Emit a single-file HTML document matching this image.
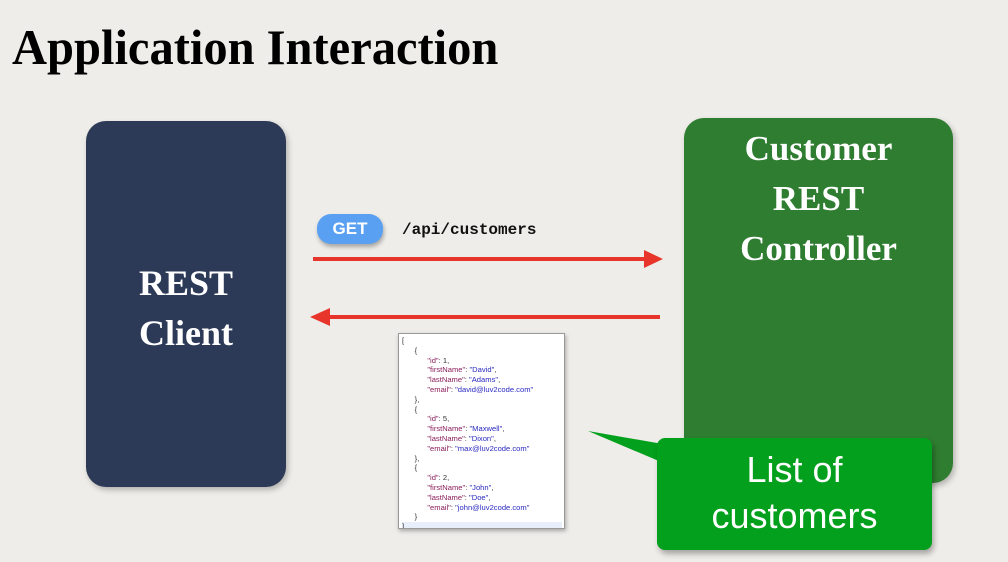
<!DOCTYPE html>
<html><head><meta charset="utf-8"><style>
body{margin:0;width:1008px;height:562px;background:#efede9;position:relative;overflow:hidden;font-family:"Liberation Sans",sans-serif}
.t{position:absolute;left:12px;top:18px;font-family:"Liberation Serif",serif;font-weight:bold;font-size:50px;color:#000;white-space:nowrap;transform:scaleX(0.97);transform-origin:left}
.box{position:absolute;border-radius:20px;color:#fff;font-family:"Liberation Serif",serif;font-weight:bold;text-align:center;box-shadow:2px 3px 6px rgba(0,0,0,.25)}
.cl{left:86px;top:121px;width:200px;height:366px;background:#2d3a57}
.gr{left:684px;top:118px;width:269px;height:365px;background:#2f7d31}
.get{position:absolute;left:317px;top:214px;width:66px;height:30px;border-radius:14px;background:#5aa0f2;color:#fff;font-weight:bold;font-size:17px;text-align:center;line-height:29px;box-shadow:1px 3px 4px rgba(0,0,0,.3)}
.api{position:absolute;left:402px;top:221px;font-family:"Liberation Mono",monospace;font-weight:bold;font-size:16px;color:#111}
.json{position:absolute;left:398px;top:333px;width:167px;height:196px;background:#fff;border:1px solid #999;box-shadow:1px 2px 4px rgba(0,0,0,.3);font-family:"Liberation Sans",sans-serif;font-size:7.6px;line-height:9.8px;color:#333;white-space:pre;padding:2px 0 0 3px;box-sizing:border-box;overflow:hidden}
.k{color:#8a1d5a}.s{color:#2a2ac0}
.last{background:#e8eefa;display:block;width:160px}
.call{position:absolute;left:657px;top:438px;width:275px;height:112px;background:#03a01d;border-radius:8px;color:#fff;font-size:36px;text-align:center;line-height:46px;padding-top:9px;box-sizing:border-box;box-shadow:2px 4px 6px rgba(0,0,0,.3)}
</style></head><body>
<div class="t">Application Interaction</div>
<div class="box cl"><div style="position:absolute;top:137px;width:100%;font-size:36px;line-height:50px">REST<br>Client</div></div>
<div class="box gr"><div style="position:absolute;top:6px;width:100%;font-size:35px;line-height:50px">Customer<br>REST<br>Controller</div></div>
<div class="get">GET</div>
<div class="api">/api/customers</div>
<svg style="position:absolute;left:0;top:0" width="1008" height="562">
<line x1="313" y1="259" x2="648" y2="259" stroke="#e8352b" stroke-width="4"/>
<polygon points="644,250 663,259 644,268" fill="#e8352b"/>
<line x1="326" y1="317" x2="660" y2="317" stroke="#e8352b" stroke-width="4"/>
<polygon points="330,308 310,317 330,326" fill="#e8352b"/>
<polygon points="588,431 680,447 680,470" fill="#03a01d"/>
</svg>
<div class="json">[
      {
            <span class="k">"id"</span>: 1,
            <span class="k">"firstName"</span>: <span class="s">"David"</span>,
            <span class="k">"lastName"</span>: <span class="s">"Adams"</span>,
            <span class="k">"email"</span>: <span class="s">"david@luv2code.com"</span>
      },
      {
            <span class="k">"id"</span>: 5,
            <span class="k">"firstName"</span>: <span class="s">"Maxwell"</span>,
            <span class="k">"lastName"</span>: <span class="s">"Dixon"</span>,
            <span class="k">"email"</span>: <span class="s">"max@luv2code.com"</span>
      },
      {
            <span class="k">"id"</span>: 2,
            <span class="k">"firstName"</span>: <span class="s">"John"</span>,
            <span class="k">"lastName"</span>: <span class="s">"Doe"</span>,
            <span class="k">"email"</span>: <span class="s">"john@luv2code.com"</span>
      }
<span class="last">]</span></div>
<div class="call">List of<br>customers</div>
</body></html>
